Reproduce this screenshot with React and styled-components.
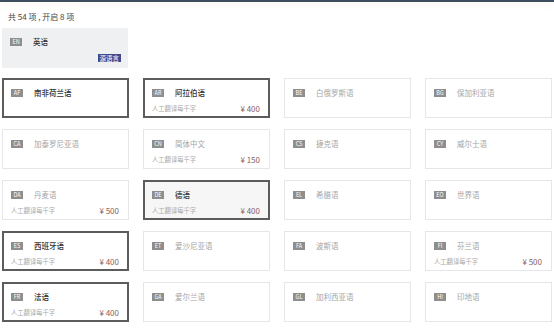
import styled, { createGlobalStyle } from "styled-components";

const GlobalStyle = createGlobalStyle`
  html, body {
    margin: 0;
    padding: 0;
    background: #fff;
  }
  body {
    font-family: "Noto Sans CJK SC", "Noto Sans", sans-serif;
    color: #333;
  }
`;

const langs = [
  { code: "AF", name: "南非荷兰语", on: true },
  { code: "AR", name: "阿拉伯语", on: true, price: 400 },
  { code: "BE", name: "白俄罗斯语" },
  { code: "BG", name: "保加利亚语" },
  { code: "CA", name: "加泰罗尼亚语" },
  { code: "CN", name: "简体中文", price: 150 },
  { code: "CS", name: "捷克语" },
  { code: "CY", name: "威尔士语" },
  { code: "DA", name: "丹麦语", price: 500 },
  { code: "DE", name: "德语", on: true, price: 400, hover: true },
  { code: "EL", name: "希腊语" },
  { code: "EO", name: "世界语" },
  { code: "ES", name: "西班牙语", on: true, price: 400 },
  { code: "ET", name: "爱沙尼亚语" },
  { code: "FA", name: "波斯语" },
  { code: "FI", name: "芬兰语", price: 500 },
  { code: "FR", name: "法语", on: true, price: 400 },
  { code: "GA", name: "爱尔兰语" },
  { code: "GL", name: "加利西亚语" },
  { code: "HI", name: "印地语" },
];

export default function App() {
  return (
    <Page>
      <GlobalStyle />
      <TopBar />
      <Summary>共 54 项 , 开启 8 项</Summary>
      <Source>
        <Head>
          <Code>EN</Code>
          <Name $on>英语</Name>
        </Head>
        <SourceTag>源语言</SourceTag>
      </Source>
      <Grid>
        {langs.map((l) => (
          <Card key={l.code} $on={l.on} $hover={l.hover}>
            <Head>
              <Code>{l.code}</Code>
              <Name $on={l.on}>{l.name}</Name>
            </Head>
            {l.price && (
              <PriceRow>
                <Label>人工翻译每千字</Label>
                <Price>¥ {l.price}</Price>
              </PriceRow>
            )}
          </Card>
        ))}
      </Grid>
    </Page>
  );
}

const Page = styled.div`
  width: 554px;
  height: 329px;
  overflow: hidden;
  background: #fff;
`;

const TopBar = styled.div`
  height: 2px;
  background: #3e4e5e;
  box-shadow: 0 2px 6px rgba(240, 220, 200, 0.5);
`;

const Summary = styled.div`
  padding: 9px 0 0 8px;
  height: 17px;
  font-size: 8px;
  line-height: 12px;
  color: #444;
`;

const Source = styled.div`
  position: relative;
  box-sizing: border-box;
  margin-left: 2px;
  width: 126px;
  height: 40px;
  background: #eff0f2;
  padding: 9px 8px 0;
`;

const SourceTag = styled.span`
  position: absolute;
  right: 7px;
  bottom: 6px;
  height: 8px;
  padding: 0 2px;
  background: #3f4a8e;
  color: #fff;
  font-size: 6.5px;
  line-height: 8px;
`;

const Grid = styled.div`
  display: grid;
  grid-template-columns: repeat(4, 127px);
  column-gap: 14px;
  row-gap: 11px;
  padding: 10px 0 0 2px;
`;

const Card = styled.div`
  box-sizing: border-box;
  height: 40px;
  padding: ${(p) => (p.$on ? "8px 8px 0 7px" : "9px 9px 0 8px")};
  border: ${(p) => (p.$on ? "2px solid #5c5c5c" : "1px solid #e6e5ea")};
  background: ${(p) => (p.$hover ? "#f6f6f7" : "#fff")};
  display: flex;
  flex-direction: column;
`;

const Head = styled.div`
  display: flex;
  align-items: center;
  height: 10px;
`;

const Code = styled.span`
  display: inline-block;
  min-width: 9px;
  height: 8px;
  padding: 0 1.5px;
  background: #8e8e8e;
  color: #fff;
  font-size: 5.5px;
  line-height: 8px;
  text-align: center;
  margin-right: 11px;
`;

const Name = styled.span`
  font-size: 7.5px;
  line-height: 10px;
  color: ${(p) => (p.$on ? "#333" : "#a5a5a5")};
  font-weight: ${(p) => (p.$on ? 500 : 400)};
`;

const PriceRow = styled.div`
  display: flex;
  justify-content: space-between;
  align-items: center;
  margin-top: 5px;
  height: 10px;
`;

const Label = styled.span`
  font-size: 6.3px;
  color: #aaa;
`;

const Price = styled.span`
  font-size: 8px;
  color: #8a6060;
`;
